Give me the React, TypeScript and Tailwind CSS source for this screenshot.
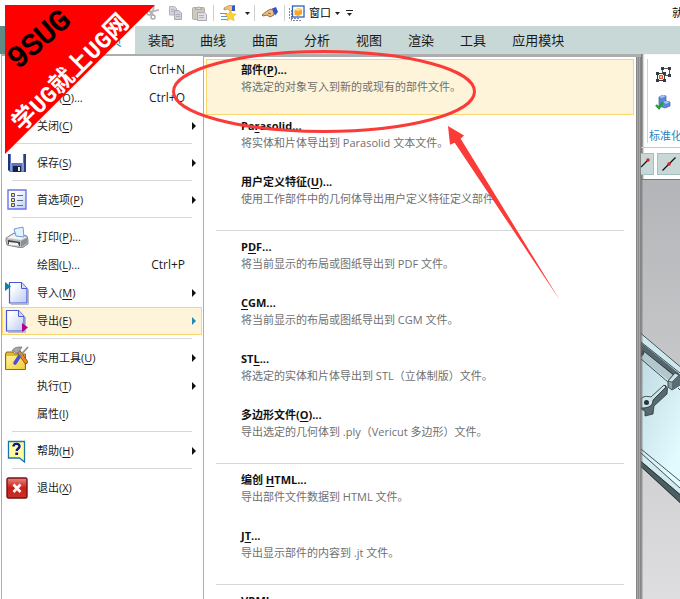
import type { ReactNode } from 'react';

const TABS = ['装配', '曲线', '曲面', '分析', '视图', '渲染', '工具', '应用模块'];

type FileItem = {
  label: string;
  hotkey: string;
  dots?: boolean;
  shortcut?: string;
  submenu?: boolean;
  active?: boolean;
  icon?: ReactNode;
};

type ExportItem = {
  before: string;
  hotkey: string;
  after: string;
  desc: string;
  active?: boolean;
};

function SaveIcon() {
  return (
    <svg width="20" height="20" viewBox="0 0 20 20">
      <path d="M1 1h18v18H3l-2-2z" fill="#5b74c4" />
      <path d="M1 1h2v17l-2-1z" fill="#22307c" />
      <path d="M17 1h2v18h-2z" fill="#2c3c86" />
      <path d="M4 1h12v9H4z" fill="#fdfdff" />
      <path d="M6 13h8v6H6z" fill="#17233c" />
      <path d="M11 14h2v4h-2z" fill="#e4ecf2" />
      <path d="M3 10h2v8H3zM15 10h2v8h-2z" fill="#7f9bd6" />
    </svg>
  );
}

function PrefsIcon() {
  return (
    <svg width="20" height="22" viewBox="0 0 20 22">
      <defs>
        <linearGradient id="prefs" x1="0" y1="0" x2="1" y2="1">
          <stop offset="0.3" stopColor="#ffffff" />
          <stop offset="1" stopColor="#b9cdf2" />
        </linearGradient>
      </defs>
      <path d="M1 1h18v19H1z" fill="url(#prefs)" stroke="#6d72ee" strokeWidth="1.4" />
      <path d="M4.500 4.500h3v3h-3zM4.500 9.500h3v3h-3zM4.500 14.500h3v3h-3z" fill="#ffe84a" stroke="#44508c" />
      <path d="M10 6.500h6M10 11.500h6M10 16.500h6" stroke="#5a6a88" />
    </svg>
  );
}

function PrintIcon() {
  return (
    <svg width="24" height="22" viewBox="0 0 24 22">
      <path d="M1 12l8-5 13 3 1 4v4l-6 4-15-3-1-4z" fill="#b9bdbf" stroke="#6f7476" strokeWidth="0.8" />
      <path d="M2 12l7-4 13 3-6 3z" fill="#f2f3f3" />
      <path d="M9 3l9-2 1 10-8-1z" fill="#e4f1ff" stroke="#6f9cd6" />
      <path d="M3 14l12 2v4L3 18z" fill="#3d4143" />
      <path d="M4 16l9 1 1 3-10-1z" fill="#f5f5f5" />
      <path d="M16 15l6-3v5l-6 4z" fill="#8b9093" />
    </svg>
  );
}

function PageIcon({ out }: { out?: boolean }) {
  return (
    <svg width="24" height="24" viewBox="0 0 24 24">
      <defs>
        <linearGradient id={out ? 'pageOut' : 'pageIn'} x1="0" y1="0" x2="1" y2="1">
          <stop offset="0.2" stopColor="#ffffff" />
          <stop offset="1" stopColor="#b9c8f5" />
        </linearGradient>
      </defs>
      {out ? (
        <>
          <path d="M3 23.500h17.500V8" stroke="#b9bcc4" fill="none" />
          <path d="M1.500 1.500h12l5.500 6V22H1.500z" fill="url(#pageOut)" stroke="#4a59d2" strokeWidth="1.200" />
          <path d="M13.500 1.500v6H19" fill="#cfe0fb" stroke="#4a59d2" />
          <path d="M17 14l6 4.500-6 4.500z" fill="#b5008e" />
        </>
      ) : (
        <>
          <path d="M6 23.500h17.500V8" stroke="#b9bcc4" fill="none" />
          <path d="M4.500 1.500h12l5.500 6V22H4.500z" fill="url(#pageIn)" stroke="#4a59d2" strokeWidth="1.200" />
          <path d="M16.500 1.500v6H22" fill="#cfe0fb" stroke="#4a59d2" />
          <path d="M0 1l6 4.500L0 10z" fill="#0f7fae" />
        </>
      )}
    </svg>
  );
}

function ToolsIcon() {
  return (
    <svg width="24" height="24" viewBox="0 0 24 24">
      <defs>
        <linearGradient id="folder" x1="0" y1="0" x2="1" y2="1">
          <stop offset="0" stopColor="#fff39a" />
          <stop offset="1" stopColor="#f3cd3c" />
        </linearGradient>
      </defs>
      <path d="M.5 8l1-2h7l1 2h11v15.500H.5z" fill="#e5b92c" stroke="#8b6a1c" />
      <path d="M1.500 10h18v13h-18z" fill="url(#folder)" />
      <path d="M14 6l7 10" stroke="#9c4c12" strokeWidth="4" strokeLinecap="round" />
      <path d="M14 6l7 10" stroke="#f08a28" strokeWidth="2.400" strokeLinecap="round" />
      <path d="M7 5c2-4 6-4 10-4l-2 3-2 3-2 0-2-2z" fill="#a4a9ac" stroke="#5f6467" strokeWidth="0.700" />
      <path d="M23 1L14 11" stroke="#8c9296" strokeWidth="1.800" />
      <path d="M14 11l-4 6" stroke="#4a50d8" strokeWidth="3.600" strokeLinecap="round" />
    </svg>
  );
}

function HelpIcon() {
  return (
    <svg width="20" height="23" viewBox="0 0 20 23">
      <path d="M1.500 1.500h16v20.500l-5-4h-11z" fill="#ffffa0" stroke="#1b74a8" strokeWidth="1.300" />
      <path d="M6.500 6.500c0-3.500 6-3.500 6 0 0 2-2.800 2-2.800 4.500" fill="none" stroke="#12128c" strokeWidth="2.400" />
      <path d="M8.300 12.500h2.800V15H8.300z" fill="#12128c" />
    </svg>
  );
}

function ExitIcon() {
  return (
    <svg width="22" height="22" viewBox="0 0 22 22">
      <defs>
        <linearGradient id="exit" x1="0" y1="0" x2="0" y2="1">
          <stop offset="0" stopColor="#e88a80" />
          <stop offset="0.500" stopColor="#cf1c12" />
          <stop offset="1" stopColor="#c4352b" />
        </linearGradient>
      </defs>
      <rect x="1" y="1" width="20" height="20" rx="1.500" fill="url(#exit)" stroke="#780f17" strokeWidth="1.400" />
      <path d="M7.500 7.500l7 7.500M14.500 7.500l-7 7.500" stroke="#fff" strokeWidth="2.600" />
    </svg>
  );
}

const FILE_GROUPS: FileItem[][] = [
  [
    { label: '新建', hotkey: 'N', dots: true, shortcut: 'Ctrl+N' },
    { label: '打开', hotkey: 'O', dots: true, shortcut: 'Ctrl+O' },
    { label: '关闭', hotkey: 'C', submenu: true },
  ],
  [{ label: '保存', hotkey: 'S', submenu: true, icon: <SaveIcon /> }],
  [{ label: '首选项', hotkey: 'P', submenu: true, icon: <PrefsIcon /> }],
  [
    { label: '打印', hotkey: 'P', dots: true, icon: <PrintIcon /> },
    { label: '绘图', hotkey: 'L', dots: true, shortcut: 'Ctrl+P' },
    { label: '导入', hotkey: 'M', submenu: true, icon: <PageIcon /> },
    { label: '导出', hotkey: 'E', submenu: true, active: true, icon: <PageIcon out /> },
  ],
  [
    { label: '实用工具', hotkey: 'U', submenu: true, icon: <ToolsIcon /> },
    { label: '执行', hotkey: 'T', submenu: true },
    { label: '属性', hotkey: 'I' },
  ],
  [{ label: '帮助', hotkey: 'H', submenu: true, icon: <HelpIcon /> }],
  [{ label: '退出', hotkey: 'X', icon: <ExitIcon /> }],
];

const EXPORT_GROUPS: ExportItem[][] = [
  [
    { before: '部件(', hotkey: 'P', after: ')...', desc: '将选定的对象写入到新的或现有的部件文件。', active: true },
    { before: 'Pa', hotkey: 'r', after: 'asolid...', desc: '将实体和片体导出到 Parasolid 文本文件。' },
    { before: '用户定义特征(', hotkey: 'U', after: ')...', desc: '使用工作部件中的几何体导出用户定义特征定义部件' },
  ],
  [
    { before: 'P', hotkey: 'D', after: 'F...', desc: '将当前显示的布局或图纸导出到 PDF 文件。' },
    { before: '', hotkey: 'C', after: 'GM...', desc: '将当前显示的布局或图纸导出到 CGM 文件。' },
    { before: 'ST', hotkey: 'L', after: '...', desc: '将选定的实体和片体导出到 STL（立体制版）文件。' },
    { before: '多边形文件(', hotkey: 'O', after: ')...', desc: '导出选定的几何体到 .ply（Vericut 多边形）文件。' },
  ],
  [
    { before: '编创 ', hotkey: 'H', after: 'TML...', desc: '导出部件文件数据到 HTML 文件。' },
    { before: 'J', hotkey: 'T', after: '...', desc: '导出显示部件的内容到 .jt 文件。' },
  ],
  [{ before: '', hotkey: 'V', after: 'RML...', desc: '' }],
];

function Hotkey({ children }: { children: ReactNode }) {
  return <span className="underline underline-offset-2">{children}</span>;
}

function Divider() {
  return (
    <div className="shrink-0 px-2.5 pt-[3px] pb-[5px]">
      <div className="h-px bg-[#d8d8d8]" />
    </div>
  );
}

function Caret() {
  return (
    <svg width="5" height="3" viewBox="0 0 5 3">
      <path d="M0 0h5L2.500 3z" fill="#222" />
    </svg>
  );
}

function QuickAccess() {
  return (
    <header className="flex h-[26px] shrink-0 items-center bg-white pl-[146px]">
      <button aria-label="剪切" className="mr-2.5">
        <svg width="13" height="16" viewBox="0 0 13 16">
          <path d="M3 7l10-2M6 10L8 1" stroke="#b9b9b9" strokeWidth="1.800" />
          <circle cx="3" cy="8" r="2" fill="none" stroke="#a9a9a9" strokeWidth="1.400" />
          <circle cx="7" cy="12" r="2" fill="none" stroke="#a9a9a9" strokeWidth="1.400" />
        </svg>
      </button>
      <button aria-label="复制" className="mr-2.5">
        <svg width="13" height="14" viewBox="0 0 13 14">
          <path d="M.5.5h5l2 2V9h-7z" fill="#d4d4da" stroke="#b4b4bc" />
          <path d="M5.500 4.500h4.500l2.500 2.500v6.500h-7z" fill="#cfcfd8" stroke="#a9a9b4" />
          <path d="M7 8.500h4M7 10.500h4M2 3.500h3M2 5.500h3" stroke="#b0b0ba" />
        </svg>
      </button>
      <button aria-label="粘贴" className="mr-1.5">
        <svg width="15" height="15" viewBox="0 0 15 15">
          <rect x="0.500" y="1.500" width="12" height="12" rx="1" fill="#cdcabd" stroke="#b2afa2" />
          <path d="M3.500 3.500V2h2a1.200 1.200 0 012.400 0h2v1.500z" fill="#dcdcdc" stroke="#a0a0a0" strokeWidth="0.800" />
          <path d="M5.500 6.500h7l2 2v6h-9z" fill="#dedee4" stroke="#a9a9b4" />
          <path d="M7 9.500h5M7 11.500h5" stroke="#b0b0bb" />
        </svg>
      </button>
      <span className="h-4 w-px bg-[#cfcfcf]" />
      <button aria-label="重复命令" className="ml-1.5 flex items-center gap-2">
        <svg width="17" height="16" viewBox="0 0 17 16">
          <path d="M0 8.500h7M1 11.500h6M1 14.500h7" stroke="#5b97d8" strokeWidth="1.200" />
          <path d="M4 3l6-3 4 1v4l-4 1-2-2-4 1z" fill="#f2c07c" stroke="#8d6434" strokeWidth="0.500" />
          <path d="M12 1l3-1v6h-3z" fill="#3956c4" />
          <path d="M10.500 5l1.700 3.700 4 .4-3 2.700.9 4-3.600-2-3.600 2 .9-4-3-2.700 4-.4z" fill="#ffd22e" stroke="#e0a81e" strokeWidth="0.500" />
        </svg>
        <Caret />
      </button>
      <span className="ml-1 h-4 w-px bg-[#cfcfcf]" />
      <button aria-label="选择" className="ml-1.5">
        <svg width="17" height="12" viewBox="0 0 17 12">
          <path d="M1 8l5-4 4-2 3 2v4l-4 2-3-2-4 1z" fill="#f0bf84" stroke="#744c28" strokeWidth="0.800" />
          <path d="M11 1.500L15 0l2 5-3 3.500z" fill="#3853bd" />
          <path d="M7 6l3 1" stroke="#744c28" strokeWidth="0.800" />
        </svg>
      </button>
      <span className="ml-1.5 h-4 w-px bg-[#cfcfcf]" />
      <button className="ml-1 flex items-center gap-1 text-[11px] leading-4 text-black">
        <svg width="16" height="16" viewBox="0 0 16 16">
          <path d="M.5 3v10.500H11" fill="none" stroke="#7783a0" strokeDasharray="2 1" />
          <path d="M2.500 5v10.500H13" fill="none" stroke="#7783a0" strokeDasharray="2 1" />
          <rect x="3.500" y="1" width="11.500" height="11" fill="#fff" stroke="#2f62c4" strokeWidth="1.300" />
          <path d="M5.500 5l3.500-2 4 1v5l-3.500 2-4-1z" fill="#f6a821" />
          <path d="M5.500 5l3.500-2 4 1-3.500 2z" fill="#ffdf7c" />
        </svg>
        窗口
        <Caret />
      </button>
      <button aria-label="更多" className="ml-1.5">
        <svg width="7" height="6" viewBox="0 0 7 6">
          <path d="M0 .5h7" stroke="#222" />
          <path d="M1 3h5L3.500 6z" fill="#222" />
        </svg>
      </button>
      <span className="ml-auto w-2 shrink-0 overflow-hidden text-[11px] leading-4 whitespace-nowrap text-black">就</span>
    </header>
  );
}

function FileMenu() {
  return (
    <nav className="ml-px w-[202px] shrink-0 border-t-2 border-l border-[#adadad] bg-white pr-px">
      {FILE_GROUPS.map((group, i) => (
        <div key={i}>
          {i > 0 && <Divider />}
          {group.map((item) => (
            <button
              key={item.label}
              className={`flex h-7 w-full items-center border text-left text-[11px] leading-4 text-[#1c1c1c] ${
                item.active ? 'border-[#fbd66e] bg-[#fdf4d9]' : 'border-transparent'
              }`}
            >
              <span className="flex w-[34px] shrink-0 items-center pl-0.5">
                <span className="flex w-6 justify-center">{item.icon}</span>
              </span>
              <span>
                {item.label}(<Hotkey>{item.hotkey}</Hotkey>){item.dots && '...'}
              </span>
              {item.shortcut && <span className="ml-auto pr-4 text-[12px]">{item.shortcut}</span>}
              {item.submenu && (
                <svg className="mr-[5px] ml-auto" width="4" height="8" viewBox="0 0 4 8">
                  <path d="M0 0l4 4-4 4z" fill={item.active ? '#2787b8' : '#111'} />
                </svg>
              )}
            </button>
          ))}
        </div>
      ))}
    </nav>
  );
}

function ExportMenu() {
  return (
    <section className="flex min-w-0 flex-1 border-t-[3px] border-l border-[#adadad] bg-white">
      <div className="min-w-0 flex-1 overflow-hidden px-0.5 pt-0.5">
        {EXPORT_GROUPS.map((group, i) => (
          <div key={i}>
            {i > 0 && <Divider />}
            {group.map((item) => (
              <button
                key={item.desc}
                className={`flex h-14 w-full flex-col border pt-px pl-[34px] text-left text-[11px] whitespace-nowrap ${
                  item.active ? 'border-[#fbd66e] bg-[#fdf4d9]' : 'border-transparent'
                }`}
              >
                <span className="leading-[17px] font-bold text-[#111]">
                  {item.before}
                  <Hotkey>{item.hotkey}</Hotkey>
                  {item.after}
                </span>
                <span className="leading-[17px] text-[#6f6f6f]">{item.desc}</span>
              </button>
            ))}
          </div>
        ))}
      </div>
      <div className="flex w-[5px] shrink-0 justify-center border-x border-[#858585] bg-[#a6a6a6]">
        <div className="w-px bg-[#8c8c8c]" />
      </div>
    </section>
  );
}

function Ribbon() {
  return (
    <div className="h-[93px] shrink-0 pt-[5px] pl-1.5">
      <div className="flex h-[84px] flex-col border-l border-[#d0d0d0] pl-px">
        <div className="flex h-[34px] items-center pl-[7px]">
          <svg className="shrink-0" width="15" height="15" viewBox="0 0 15 15">
            <path d="M6.500 1.500h7v7h-7z" fill="none" stroke="#555b66" />
            <path d="M1.500 6.500h7v7h-7z" fill="#fff" stroke="#343a46" />
            <path d="M5 0h3v3H5zM12 0h3v3h-3zM12 7h3v3h-3zM0 5h3v3H0zM7 5h3v3H7zM0 12h3v3H0zM7 12h3v3H7z" fill="#343a46" />
            <rect x="3.500" y="8.500" width="3" height="3" fill="#ffd24a" stroke="#e8503c" />
          </svg>
          <svg className="ml-2 shrink-0" width="4" height="14" viewBox="0 0 4 14">
            <path d="M1 1.500h3M1 5.500h3M1 9.500h3M1 12.500h3" stroke="#555" />
          </svg>
        </div>
        <div className="flex h-[26px] items-center pl-1.5">
          <svg className="shrink-0" width="16" height="15" viewBox="0 0 16 15">
            <path d="M4 2l4-2 3 1v5l4 1v4l-5 2-6-2z" fill="#5c86dc" stroke="#3c5eae" strokeWidth="0.700" />
            <path d="M4 2l4-2 3 1-4 2zM8 7l3-1 4 1-4 2z" fill="#a9c4f5" />
            <path d="M1 10l3 3 4-6" fill="none" stroke="#2c9c38" strokeWidth="2.400" />
          </svg>
          <svg className="ml-2 shrink-0" width="4" height="9" viewBox="0 0 4 9">
            <circle cx="4.500" cy="5" r="3.500" fill="#3c9a45" />
          </svg>
        </div>
        <span className="mt-3.5 overflow-hidden text-[11px] leading-4 whitespace-nowrap text-[#2b86bd]">标准化</span>
      </div>
    </div>
  );
}

function SnapBar() {
  return (
    <div className="flex h-[33px] shrink-0 items-center gap-[3px] overflow-hidden border-t border-b border-t-[#c9c9c9] border-b-[#77797b]">
      <button aria-label="端点" className="flex h-[22px] w-[13px] shrink-0 items-center border border-l-0 border-[#a5c1bf] bg-[#c8d8d7]">
        <svg width="10" height="14" viewBox="0 0 10 14">
          <path d="M0 10l7-7" stroke="#111" strokeWidth="1.200" />
          <circle cx="7" cy="3" r="1.700" fill="#e41b1b" />
        </svg>
      </button>
      <button aria-label="中点" className="flex h-[22px] w-6 shrink-0 items-center justify-center border border-[#a5c1bf] bg-[#c8d8d7]">
        <svg width="14" height="14" viewBox="0 0 14 14">
          <path d="M.5 13.500l13-13" stroke="#111" strokeWidth="1.200" />
          <circle cx="7" cy="7" r="1.800" fill="#e41b1b" />
        </svg>
      </button>
    </div>
  );
}

function Viewport() {
  return (
    <div className="min-h-0 flex-1 overflow-hidden bg-linear-to-b from-[#b4b5b8] to-[#dedee0]">
      <svg width="39" height="419" viewBox="641 180 39 419">
        <defs>
          <linearGradient id="plate" x1="0" y1="0" x2="0.6" y2="1">
            <stop offset="0.200" stopColor="#c3dde5" />
            <stop offset="1" stopColor="#e2fbff" />
          </linearGradient>
          <linearGradient id="edge" x1="0" y1="0" x2="0" y2="419" gradientUnits="userSpaceOnUse">
            <stop offset="0" stopColor="#666" />
            <stop offset="1" stopColor="#777" />
          </linearGradient>
        </defs>
        <path d="M641 333l39 33v122l-39-35z" fill="url(#plate)" />
        <path d="M641 333l39 33v7l-39-31z" fill="#cfe8ee" />
        <path d="M641 333.500l39 33M641 342l39 31" stroke="#20292b" strokeWidth="0.800" fill="none" />
        <path d="M641 342.500l38 31v7l-6 2-32-27z" fill="#52666b" />
        <path d="M641 349l33 27-3 6-30-23z" fill="#b3c8cd" />
        <path d="M641 349l33 26" stroke="#20292b" strokeWidth="0.600" />
        <path d="M641 350l3 1c1 2 0 4-3 6z" fill="#3c4a4e" />
        <path d="M641 359l27 23M678 388l2 2" stroke="#20292b" strokeWidth="0.800" />
        <path d="M668 381l7-8 5 2v10l-8 5-4-3z" fill="#8ba1a6" stroke="#20292b" strokeWidth="0.800" />
        <path d="M668 381l7-8 4 2-7 7z" fill="#cbe2e8" stroke="#20292b" strokeWidth="0.600" />
        <path d="M672 382v8l8-5v-9l-2-.5z" fill="#5a6d72" />
        <path d="M641 409l4 2v5l8-2 1-8 13-12 .5-6-2.500-3-13 12z" fill="#566a6f" stroke="#20292b" strokeWidth="0.700" />
        <path d="M641 399c2-3 6-3 10-2l13-12 2 2-13 13c0 7-6 8-12 8z" fill="#cce4ea" stroke="#20292b" strokeWidth="0.800" />
        <circle cx="646.500" cy="402.500" r="2.500" fill="#28363a" />
        <path d="M641 453l39 35v7l-39-34z" fill="#d3eaf0" />
        <path d="M641 449l39 32M641 453l39 35" stroke="#20292b" strokeWidth="0.800" />
        <path d="M641 461l39 33v9l-39-36z" fill="#4b5e62" />
        <path d="M641 461.500l39 33M641 466.500l39 36" stroke="#1d2628" strokeWidth="0.800" />
        <path d="M641 180h1v419h-1z" fill="#666" fillOpacity="0.600" />
        <path d="M642 180h1v419h-1z" fill="#666" fillOpacity="0.300" />
      </svg>
    </div>
  );
}

function CornerBanner() {
  return (
    <svg className="absolute top-[5px] left-[5px]" width="150" height="150" viewBox="5 5 150 150">
      <path d="M5 5h150L5 154z" fill="#fe0000" />
      <g textAnchor="middle">
        <text
          transform="translate(45 46) rotate(-41)"
          fontFamily="'Liberation Mono', monospace"
          fontSize="30"
          fill="#000"
          stroke="#000"
          strokeWidth="1.200"
        >
          9SUG
        </text>
        <text
          transform="translate(76 78) rotate(-45)"
          fontFamily="'Liberation Mono', 'Noto Sans CJK SC', monospace"
          fontSize="24"
          fontWeight="700"
          fill="#fff"
        >
          学UG就上UG网
        </text>
      </g>
    </svg>
  );
}

function Annotations() {
  return (
    <svg className="pointer-events-none absolute top-0 left-0" width="600" height="320" viewBox="0 0 600 320">
      <ellipse cx="324" cy="91.500" rx="150.500" ry="40" fill="none" stroke="#fb3b38" strokeWidth="3" />
      <path d="M448 126l16 9.500-3.300 3.200 99 161.300-105-157.300-4.700 2z" fill="#fb3b38" />
    </svg>
  );
}

export default function App() {
  return (
    <div className="relative flex h-screen flex-col overflow-hidden bg-white font-['Open_Sans','Noto_Sans_CJK_SC',sans-serif]">
      <QuickAccess />
      <div className="flex h-7 shrink-0 bg-[#c8d8d7] text-[13px] leading-7 text-[#1a1a1a]">
        <button className="w-[83px] shrink-0 bg-[#5f8b84] text-white">文件(F)</button>
        <button className="shrink-0 bg-white px-[13px] text-[#2787b8]">主页</button>
        {TABS.map((tab) => (
          <button key={tab} className="shrink-0 px-[13px]">
            {tab}
          </button>
        ))}
      </div>
      <main className="flex min-h-0 flex-1">
        <FileMenu />
        <ExportMenu />
        <aside className="flex w-[39px] shrink-0 flex-col bg-white shadow-[inset_3px_0_2px_-1px_#777]">
          <Ribbon />
          <SnapBar />
          <Viewport />
        </aside>
      </main>
      <CornerBanner />
      <Annotations />
    </div>
  );
}
